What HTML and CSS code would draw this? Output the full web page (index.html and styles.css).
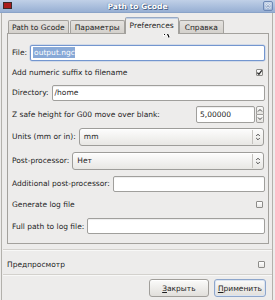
FILE: index.html
```html
<!DOCTYPE html>
<html>
<head>
<meta charset="utf-8">
<link rel="stylesheet" href="styles.css">
</head>
<body>
<div class="window">
  <div class="titlebar">
    <span class="app-icon"></span>
    <span class="title">Path to Gcode</span>
    <span class="close">
      <svg width="10" height="10" viewBox="0 0 10 10"><path d="M2.5 2.5 L7.5 7.5 M7.5 2.5 L2.5 7.5" stroke="#ffffff" stroke-width="1.6" stroke-linecap="round"/><path d="M2.5 2.5 L7.5 7.5 M7.5 2.5 L2.5 7.5" stroke="#5874a3" stroke-width="0.6" stroke-linecap="round"/></svg>
    </span>
  </div>
  <div class="client">
    <div class="tabs">
      <div class="tab">Path to Gcode</div>
      <div class="tab">Параметры</div>
      <div class="tab active">Preferences</div>
      <div class="tab">Справка</div>
    </div>
    <div class="panel">
      <div class="row">
        <span class="label">File:</span>
        <div class="entry focus"><span class="sel">output.ngc</span></div>
      </div>
      <div class="row">
        <span class="label">Add numeric suffix to filename</span>
        <span class="check checked"><svg width="7" height="7" viewBox="0 0 7 7"><path d="M1.3 3.6 L2.9 5.3 L5.8 1.3" fill="none" stroke="#2a2a2a" stroke-width="1.3"/></svg></span>
      </div>
      <div class="row">
        <span class="label">Directory:</span>
        <div class="entry">/home</div>
      </div>
      <div class="row">
        <span class="label">Z safe height for G00 move over blank:</span>
        <div class="spin">
          <div class="spin-entry">5,00000</div>
          <div class="spin-btns">
            <span class="spin-btn"><svg width="6" height="5" viewBox="0 0 6 5"><path d="M1 3.5 L3 1.5 L5 3.5" fill="none" stroke="#333" stroke-width="0.9"/></svg></span>
            <span class="spin-btn"><svg width="6" height="5" viewBox="0 0 6 5"><path d="M1 1.5 L3 3.5 L5 1.5" fill="none" stroke="#333" stroke-width="0.9"/></svg></span>
          </div>
        </div>
      </div>
      <div class="row">
        <span class="label">Units (mm or in):</span>
        <div class="combo"><span class="combo-text">mm</span><span class="combo-arrows"><svg width="6" height="10" viewBox="0 0 6 10"><path d="M1.2 4 L3 2.2 L4.8 4 M1.2 6 L3 7.8 L4.8 6" fill="none" stroke="#3a3a3a" stroke-width="0.9"/></svg></span></div>
      </div>
      <div class="row">
        <span class="label">Post-processor:</span>
        <div class="combo"><span class="combo-text">Нет</span><span class="combo-arrows"><svg width="6" height="10" viewBox="0 0 6 10"><path d="M1.2 4 L3 2.2 L4.8 4 M1.2 6 L3 7.8 L4.8 6" fill="none" stroke="#3a3a3a" stroke-width="0.9"/></svg></span></div>
      </div>
      <div class="row">
        <span class="label">Additional post-processor:</span>
        <div class="entry"></div>
      </div>
      <div class="row">
        <span class="label">Generate log file</span>
        <span class="check"></span>
      </div>
      <div class="row">
        <span class="label">Full path to log file:</span>
        <div class="entry"></div>
      </div>
    </div>
    <div class="sep"></div>
    <div class="preview">
      <span class="label">Предпросмотр</span>
      <span class="check"></span>
    </div>
    <div class="sep"></div>
    <div class="buttons">
      <button class="btn"><u>З</u>акрыть</button>
      <button class="btn default"><u>П</u>рименить</button>
    </div>
  </div>
  <svg class="cursor" width="10" height="16" viewBox="0 0 10 16"><path d="M0.5 0.5 V12.5 L3.3 9.8 L5.3 14.3 L7.3 13.4 L5.3 9 H9 Z" fill="#111" stroke="#fff" stroke-width="1" stroke-linejoin="round"/></svg>
</div>
</body>
</html>
```

FILE: styles.css
```css
* { box-sizing: border-box; }
html, body { margin: 0; padding: 0; }
body {
  width: 275px;
  height: 300px;
  overflow: hidden;
  background: #edeceb;
  font-family: "DejaVu Sans", sans-serif;
  font-size: 7.5px;
  color: #1e1e1e;
}
.window {
  position: relative;
  width: 275px;
  height: 300px;
  display: flex;
  flex-direction: column;
  background: #edeceb;
}
.titlebar {
  height: 13px;
  flex: none;
  display: grid;
  grid-template-columns: 1fr auto 1fr;
  align-items: center;
  background: linear-gradient(#c0d0e7, #97afd3);
  border-bottom: 1px solid #8aa3c8;
}
.app-icon {
  justify-self: start;
  margin-left: 3px;
  margin-top: -1px;
  width: 9px;
  height: 7px;
  background: #a81c1c;
  border: 1px solid #3a2a2a;
}
.title {
  font-weight: bold;
  font-size: 7.6px;
  color: #ffffff;
  text-shadow: 0 0 1px #3b5277, 1px 1px 0 #50688f;
}
.close {
  justify-self: end;
  margin-right: 2px;
  width: 10px;
  height: 10px;
  border: 1px solid #6d88b5;
  border-radius: 2px;
  background: linear-gradient(#c8d6ea, #9fb5d6);
  display: flex;
  align-items: center;
  justify-content: center;
}
.close svg { display: block; }
.client {
  flex: 1;
  display: flex;
  flex-direction: column;
  margin: 0 2px 0 1px;
  border-left: 1px solid #b3b1ac;
  border-right: 1px solid #b3b1ac;
  padding: 4px 3px 0 5px;
}
.tabs {
  height: 16px;
  display: flex;
  align-items: flex-end;
  margin-left: 1px;
  position: relative;
  z-index: 1;
}
.tab {
  height: 13px;
  padding: 1px 4px 0 4px;
  border: 1px solid #a3a19d;
  border-bottom: none;
  border-radius: 2px 2px 0 0;
  background: linear-gradient(#e4e2df, #d4d1cc);
  display: flex;
  align-items: center;
  white-space: nowrap;
  margin-right: 1px;
}
.tab:first-child { padding: 1px 3px 0 3px; }
.tab.active {
  height: 17px;
  margin-bottom: -1px;
  padding: 0 4px 1px 4px;
  background: #edeceb;
  border-color: #98a9c4 #a3a19d #a3a19d #a3a19d;
  box-shadow: inset 0 1px 0 #c2d1e6;
  margin-left: -1px;
  margin-right: 0;
}
.tab:last-child { padding: 1px 5px 0 5px; }
.panel {
  height: 211px;
  border: 1px solid #a3a19d;
  padding: 9px 3px 6px 4px;
  display: flex;
  flex-direction: column;
}
.row {
  display: flex;
  align-items: center;
}
.row:nth-child(1) { height: 19px; }
.row:nth-child(2) { height: 20px; }
.row:nth-child(3) { height: 21px; }
.row:nth-child(4) { height: 22px; }
.row:nth-child(5) { height: 23px; }
.row:nth-child(6) { height: 25px; }
.row:nth-child(7) { height: 21px; }
.row:nth-child(8) { height: 21px; }
.row:nth-child(9) { height: 22px; }
.label {
  white-space: nowrap;
  margin-right: 3px;
}
.entry {
  flex: 1;
  height: 16px;
  border: 1px solid #a09f9c;
  border-radius: 2px;
  background: #ffffff;
  box-shadow: inset 0 1px 1px rgba(0, 0, 0, 0.07);
  padding: 0 2px;
  display: flex;
  align-items: center;
  white-space: nowrap;
}
.entry.focus {
  border-color: #7396cf;
  box-shadow: 0 0 0 0.5px #b7c8e3;
}
.sel {
  background: #88a9d7;
  color: #ffffff;
  padding: 1px 0 1px 1px;
}
.check {
  margin-left: auto;
  margin-right: 2px;
  width: 7px;
  height: 7px;
  border: 1px solid #8d8c89;
  border-radius: 1px;
  background: linear-gradient(#ffffff, #e9e8e6);
  display: flex;
  align-items: center;
  justify-content: center;
  flex: none;
}
.check svg { display: block; margin: -1px; }
.spin {
  margin-left: auto;
  margin-right: 1px;
  display: flex;
  align-items: stretch;
  height: 17px;
}
.spin-entry {
  width: 59px;
  border: 1px solid #a09f9c;
  border-radius: 2px;
  background: #ffffff;
  box-shadow: inset 0 1px 1px rgba(0, 0, 0, 0.07);
  padding: 0 3px;
  display: flex;
  align-items: center;
}
.spin-btns {
  width: 8px;
  display: flex;
  flex-direction: column;
  margin-left: 1px;
}
.spin-btn {
  flex: 1;
  border: 1px solid #a09f9c;
  background: linear-gradient(#fafaf9, #e4e2df);
  display: flex;
  align-items: center;
  justify-content: center;
}
.spin-btn:first-child { border-radius: 2px 2px 0 0; }
.spin-btn:last-child { border-radius: 0 0 2px 2px; border-top: none; }
.spin-btn svg { display: block; }
.combo {
  flex: 1;
  height: 18px;
  border: 1px solid #9e9d9a;
  border-radius: 3px;
  background: linear-gradient(#fdfdfd, #e8e7e4);
  box-shadow: inset 0 1px 0 #ffffff;
  display: flex;
  align-items: center;
  margin-right: 1px;
}
.combo-text {
  flex: 1;
  padding-left: 4px;
}
.combo-arrows {
  width: 11px;
  height: 14px;
  border-left: 1px solid #c4c2be;
  display: flex;
  align-items: center;
  justify-content: center;
}
.combo-arrows svg { display: block; }
.sep {
  height: 2px;
  border-top: 1px solid #d3d1cd;
  border-bottom: 1px solid #f8f8f7;
  margin: 0 -3px 0 -4px;
}
.panel + .sep { margin-top: 5px; }
.preview {
  height: 23px;
  display: flex;
  align-items: center;
  padding-top: 3px;
  padding-right: 2px;
}
.buttons {
  display: flex;
  justify-content: flex-end;
  gap: 5px;
  margin-top: 3px;
  padding-right: 3px;
}
.btn {
  font-family: "DejaVu Sans", sans-serif;
  font-size: 7.5px;
  color: #1e1e1e;
  height: 18px;
  min-width: 60px;
  padding: 0 3px;
  border: 1px solid #a09e9a;
  border-radius: 3px;
  background: linear-gradient(#fbfbfa, #e1dfdb);
  box-shadow: inset 0 1px 0 #ffffff;
}
.btn.default {
  min-width: 0;
  border-color: #8ea6cb;
  box-shadow: inset 0 0 0 1px #dbe4f1;
}
.btn u { text-decoration-thickness: 1px; text-underline-offset: 1px; }
.cursor {
  position: absolute;
  left: 163px;
  top: 24px;
}
```
